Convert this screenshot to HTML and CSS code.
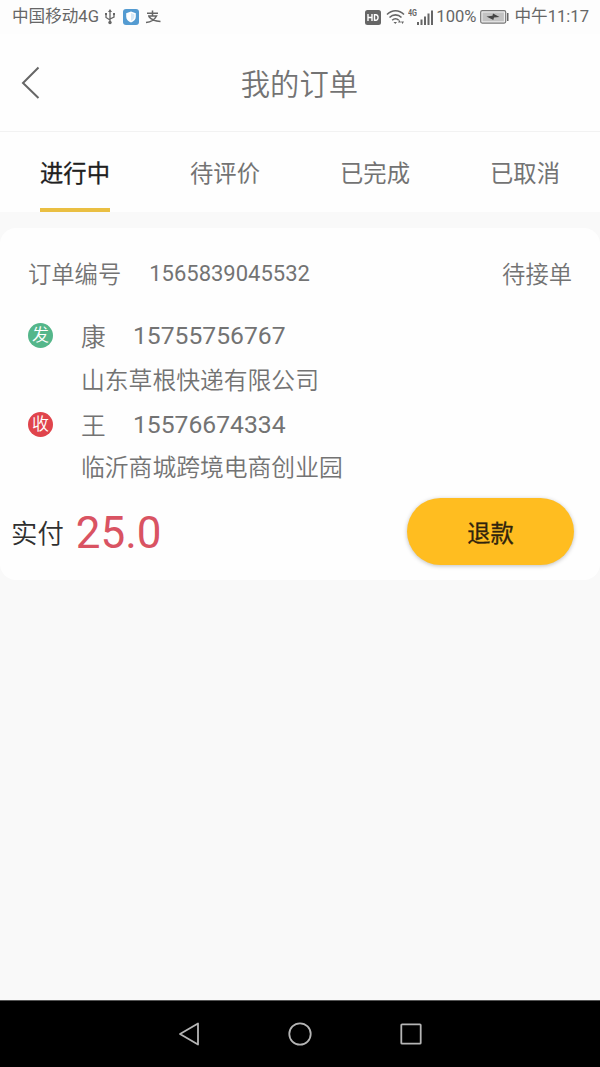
FILE: index.html
```html
<!DOCTYPE html>
<html lang="zh-CN">
<head>
<meta charset="utf-8">
<title>我的订单</title>
<link rel="stylesheet" href="styles.css">
</head>
<body>
<div class="screen">
  <div class="status">
    <div class="status-left">
      <span>中国移动4G</span>
      <svg class="usb" width="12" height="18" viewBox="0 0 12 18" fill="none" stroke="#666" stroke-width="1.3"><path d="M6 3v11M2 6v3.5L6 12M10 6v3L6 11"/><path d="M6 1l2 3H4zM1 5h2v2H1zM9 5h2v2H9z" fill="#666" stroke="none"/><circle cx="6" cy="14.5" r="1.7" fill="#666" stroke="none"/></svg>
      <svg class="shield" width="16" height="16" viewBox="0 0 16 16"><rect width="16" height="16" rx="3" fill="#549bd1"/><path d="M8 2.5l4.8 1.7v3.5c0 2.8-2 4.7-4.8 5.9-2.800-1.200-4.800-3.100-4.800-5.900V4.200z" fill="#fff"/><path d="M8 4v8c2-1 3.400-2.300 3.400-4.400V5.200z" fill="#d5e8f6"/></svg>
      <svg class="pay" width="17" height="14" viewBox="0 0 17 14" fill="none" stroke="#666" stroke-width="1.5"><path d="M2 3.200h11M7.500 .5v5.300M3 6h8.500C10 9 6 12 1 12.500M4 6.800c2 2.600 6 4.400 11.500 4.700"/></svg>
    </div>
    <div class="status-right">
      <svg width="16" height="15" viewBox="0 0 16 15"><rect width="16" height="15" rx="2.500" fill="#666"/><path d="M3 4v7M7 4v7M3 7.500h4M9.500 4.700h1.300c3 0 3 5.600 0 5.600H9.500z" fill="none" stroke="#fff" stroke-width="1.400"/></svg>
      <svg class="wifi" width="20" height="16" viewBox="0 0 20 16" fill="none" stroke="#666" stroke-width="1.600"><path d="M1 5.500c5-5 12-5 17 0M3.500 8.500c3.500-3.500 8.500-3.500 12 0M6.200 11.300c2-2 4.600-2 6.600 0"/><path d="M7.500 13h3.500l-1.700 2zM12 13.500l1.500-2.500 1.500 2.500zM15 12.500h3l-1.500 2.500z" fill="#666" stroke="none"/></svg>
      <svg class="signal" width="26" height="18" viewBox="0 0 26 18"><text x="0" y="8" textLength="9" lengthAdjust="spacingAndGlyphs" class="net">4G</text><path d="M9 14h2v3H9zM12.500 11.500h2V17h-2zM16 8.500h2V17h-2zM19.500 5.500h2V17h-2zM23 2.500h2V17h-2z" fill="#666"/></svg>
      <span class="percent">100%</span>
      <svg class="battery" width="29" height="14" viewBox="0 0 29 14"><rect x=".7" y=".7" width="25" height="12.400" rx="1.500" fill="#eee" stroke="#777" stroke-width="1.200"/><rect x="2.500" y="2.500" width="21.400" height="8.800" fill="#c2c2c2"/><path d="M6.500 6.500l6-.8.500-2.200 6.500 3.400-5.500.7-.7 2.300z" fill="#444"/><path d="M27 3h1.500v8H27z" fill="#666"/></svg>
      <span class="clock">中午11:17</span>
    </div>
  </div>
  <header class="header">
    <svg class="back" width="20" height="34" viewBox="0 0 20 34" fill="none" stroke="#666" stroke-width="2"><path d="M17.500 1.500L2 17l15.500 15"/></svg>
    <h1 class="title">我的订单</h1>
  </header>
  <nav class="tabs">
    <div class="tab active"><span>进行中</span></div>
    <div class="tab"><span>待评价</span></div>
    <div class="tab"><span>已完成</span></div>
    <div class="tab"><span>已取消</span></div>
  </nav>
  <main class="card">
    <div class="order"><span>订单编号</span><span class="number">1565839045532</span><span class="state">待接单</span></div>
    <div class="contact"><span class="badge send">发</span><span class="name">康</span><span class="phone">15755756767</span></div>
    <div class="address">山东草根快递有限公司</div>
    <div class="contact second"><span class="badge receive">收</span><span class="name">王</span><span class="phone">15576674334</span></div>
    <div class="address">临沂商城跨境电商创业园</div>
    <div class="payment"><span class="paid">实付</span><span class="amount">25.0</span><button class="refund">退款</button></div>
  </main>
  <footer class="navbar">
    <svg width="22" height="24" viewBox="0 0 22 24"><path d="M20 1.500v21L2 12z"/></svg>
    <svg width="24" height="24" viewBox="0 0 24 24"><circle cx="12" cy="12" r="10.700"/></svg>
    <svg width="22" height="22" viewBox="0 0 22 22"><rect x="1.300" y="1.300" width="19.400" height="19.400" rx=".8"/></svg>
  </footer>
</div>
</body>
</html>
```
FILE: styles.css
```css
* { box-sizing: border-box; }
body { margin: 0; }
.screen {
  width: 600px;
  height: 1067px;
  display: flex;
  flex-direction: column;
  background: #f9f9f9;
  color: #737373;
  font-family: Roboto, "Noto Sans CJK SC", sans-serif;
  font-weight: 350;
  white-space: nowrap;
  overflow: hidden;
}
.status {
  height: 34px;
  padding: 0 11px 0 12px;
  display: flex;
  justify-content: space-between;
  background: #fdfdfd;
  color: #666;
  font-size: 16.600px;
  font-weight: 400;
  line-height: 36px;
}
.status-left, .status-right { display: flex; align-items: center; }
.usb { margin-left: 5px; }
.shield { margin-left: 7px; }
.pay { margin-left: 6px; }
.wifi { margin-left: 5px; }
.signal { margin-left: 2px; }
.net { font: bold 9px Roboto, sans-serif; fill: #666; }
.percent { margin-left: 2px; }
.battery { margin-left: 4px; }
.clock { margin-left: 5px; }
.header {
  height: 98px;
  padding: 0 242px 0 21px;
  display: flex;
  align-items: center;
  justify-content: space-between;
  background: #fefefe;
  border-bottom: 1px solid #f2f2f2;
}
.title { margin: 0; padding-top: 4px; font-size: 29.300px; font-weight: 350; line-height: 44px; }
.tabs { height: 80px; display: grid; grid-template-columns: repeat(4, 1fr); background: #fefefe; }
.tab { display: flex; justify-content: center; font-size: 23.300px; font-weight: 400; line-height: 84px; }
.tab span { height: 80px; }
.tab.active { color: #202020; -webkit-text-stroke: .3px #202020; }
.active span { border-bottom: 4px solid #eabf42; }
.card {
  height: 352px;
  margin-top: 16px;
  border-radius: 16px;
  background: #fefefe;
  display: flex;
  flex-direction: column;
}
.order { height: 90px; padding: 0 28px; display: flex; align-items: center; font-size: 23.300px; }
.number { margin-left: 28px; font-size: 22px; font-weight: 400; }
.state { margin-left: auto; }
.contact { height: 34px; padding-left: 28px; display: flex; align-items: center; font-size: 24.700px; }
.second { height: 44px; }
.phone { font-weight: 400; }
.badge {
  width: 25px;
  height: 25px;
  border-radius: 50%;
  color: #fff;
  font-size: 17px;
  line-height: 25px;
  text-align: center;
}
.send { background: #54b68a; }
.receive { background: #e0444c; }
.name { width: 52px; margin-left: 28px; }
.address { height: 50px; padding-left: 81px; font-size: 23.800px; line-height: 59px; }
.second + .address { height: 45px; line-height: 45px; }
.payment { height: 81px; padding: 0 26px 0 11px; display: flex; align-items: center; }
.paid { color: #303030; font-size: 26.400px; }
.amount { margin-left: 12px; color: #d95362; font-size: 44px; font-weight: 400; line-height: 50px; padding-top: 2px; }
.refund {
  width: 167px;
  height: 67px;
  margin-left: auto;
  padding: 0;
  border: 0;
  border-radius: 34px;
  background: #ffbd20;
  box-shadow: 0 1px 4px #00000040;
  color: #30230d;
  -webkit-text-stroke: .3px #30230d;
  font: 400 23.300px Roboto, "Noto Sans CJK SC", sans-serif;
}
.navbar {
  height: 67px;
  margin-top: auto;
  display: flex;
  align-items: center;
  justify-content: center;
  gap: 88px;
  background: #000;
  border-top: 1px solid #555;
}
.navbar svg { fill: none; stroke: #b5b5b5; stroke-width: 1.800; stroke-linejoin: round; }
```
